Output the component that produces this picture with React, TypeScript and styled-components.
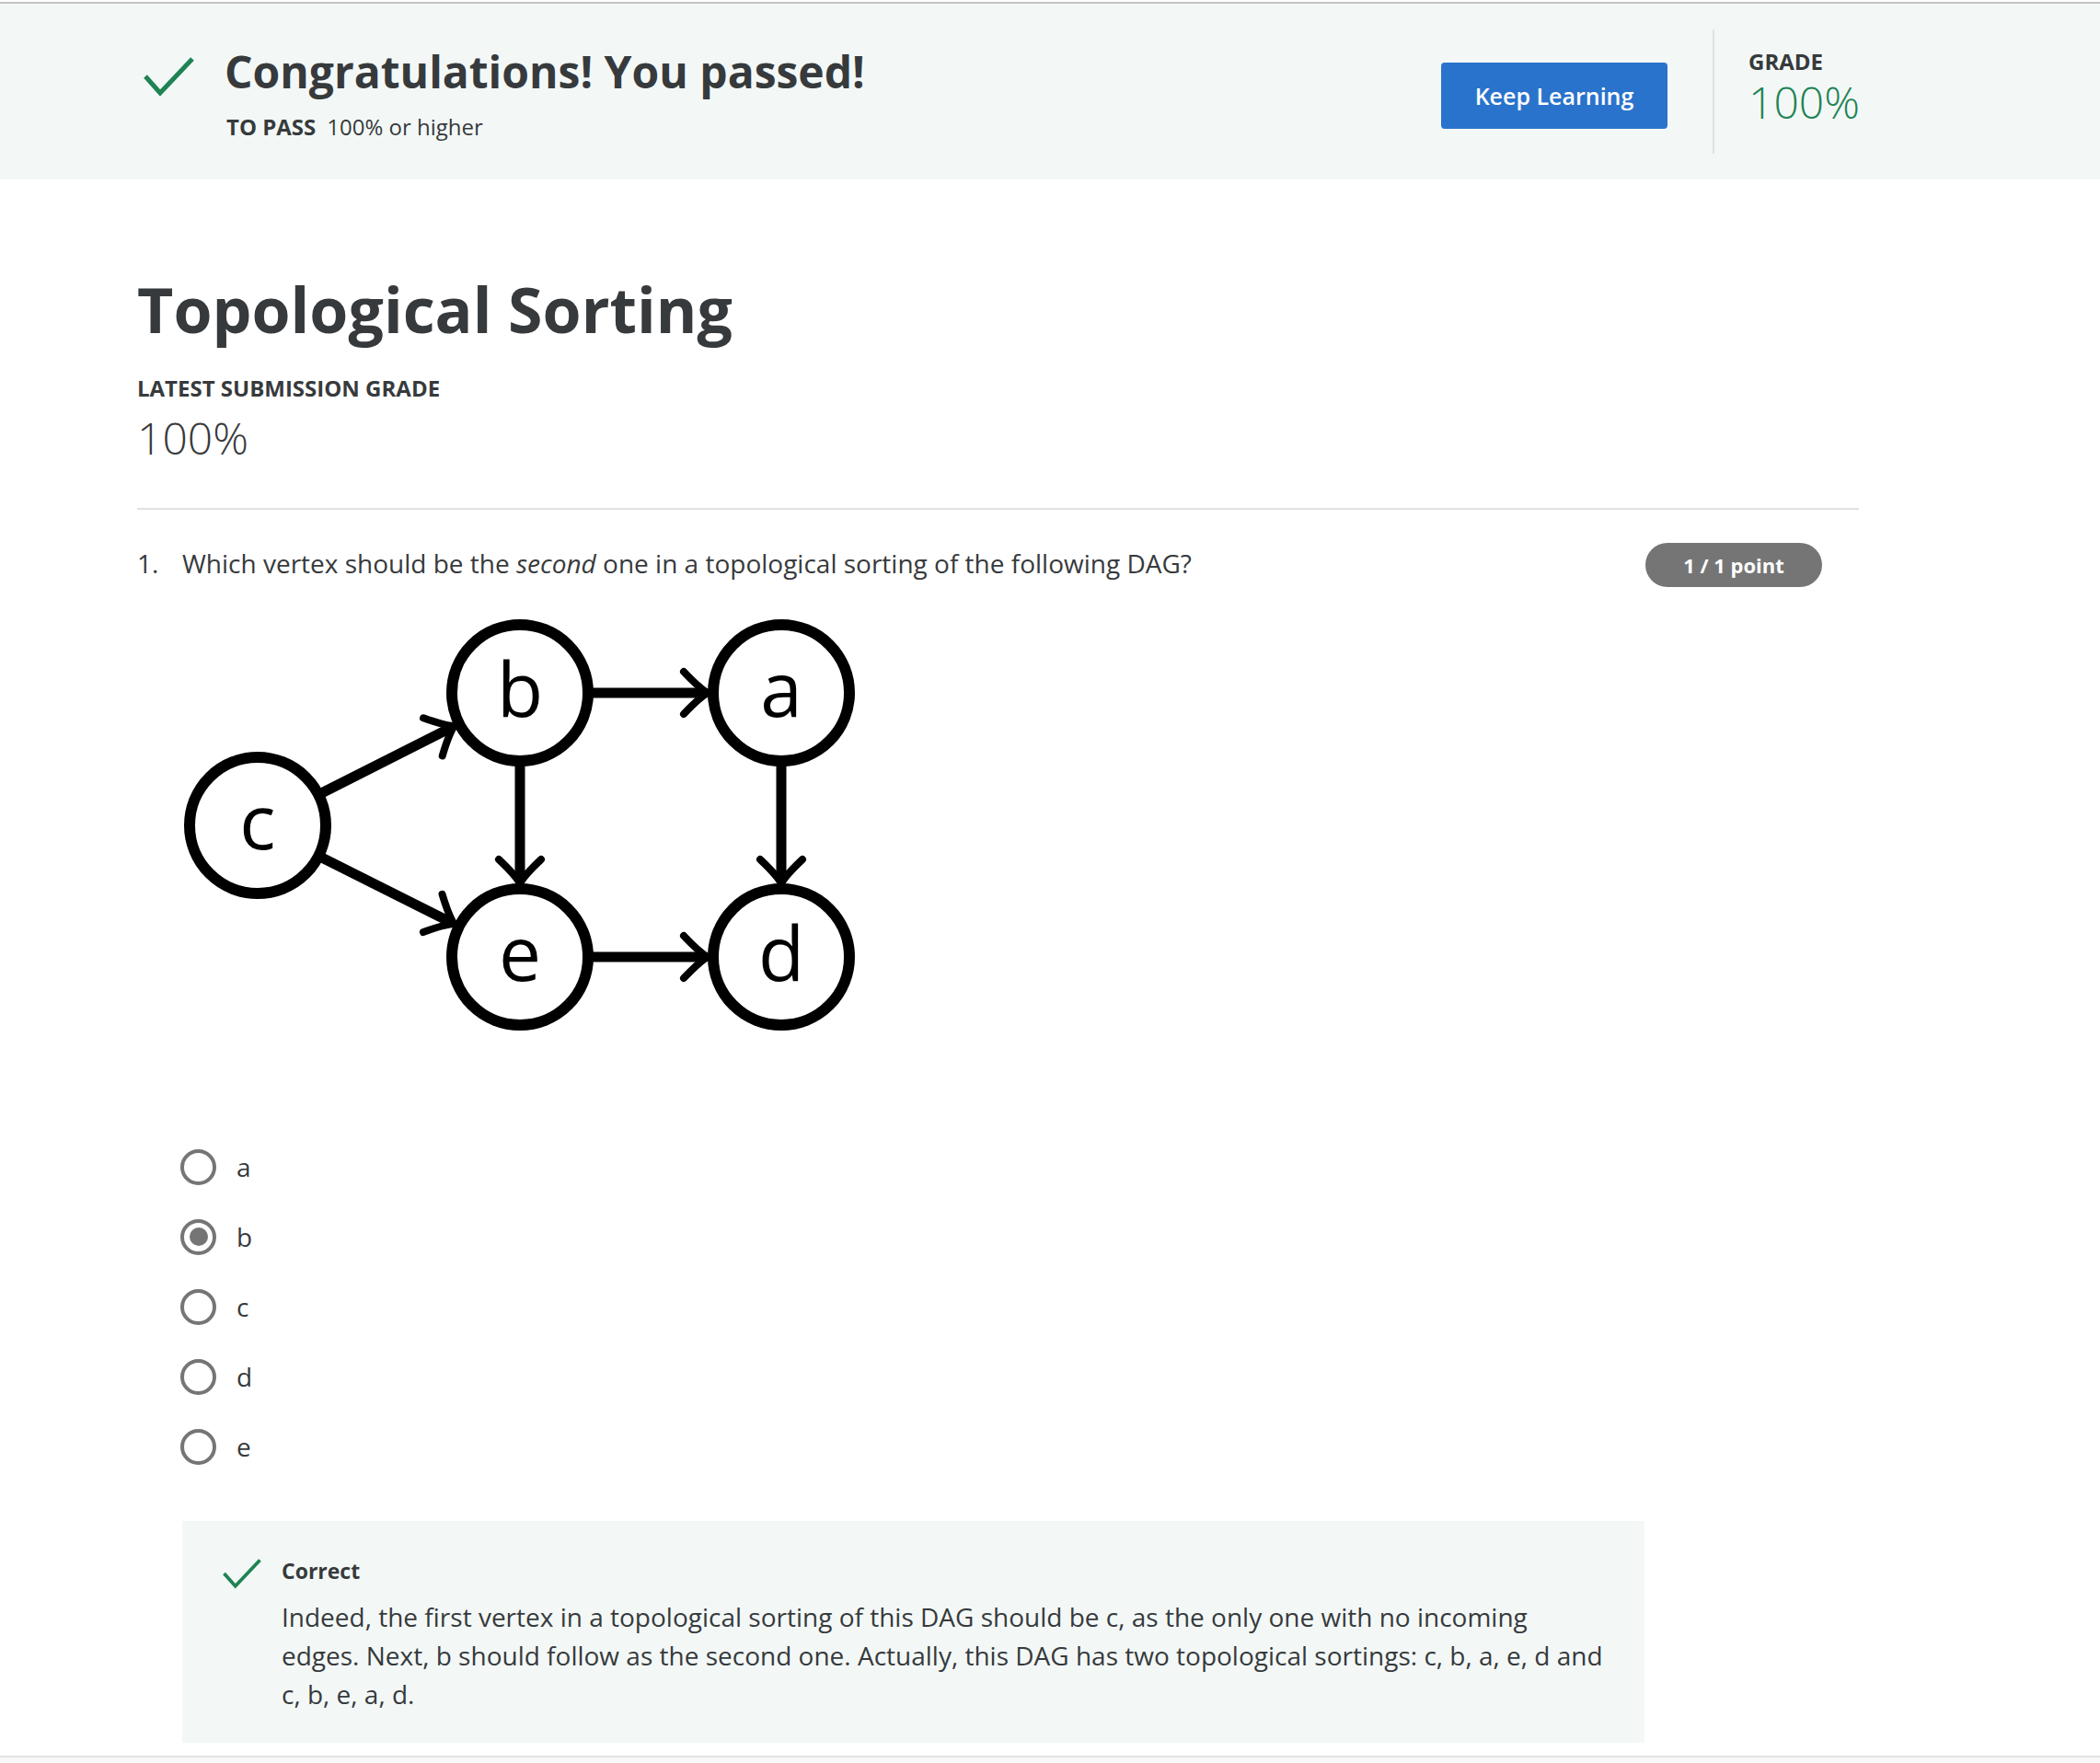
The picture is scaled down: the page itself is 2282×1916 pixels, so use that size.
import React from 'react'
import styled, { createGlobalStyle } from 'styled-components'

const GlobalStyle = createGlobalStyle`
  html, body {
    margin: 0;
    padding: 0;
    background: #ffffff;
  }
  body {
    font-family: 'Open Sans', 'Liberation Sans', sans-serif;
    color: #373a3c;
  }
  * {
    box-sizing: border-box;
  }
`

const Page = styled.div`
  padding-top: 2px;
`

const Banner = styled.header`
  display: flex;
  align-items: center;
  background: #f3f8f7;
  border-top: 2px solid #c4c4c4;
  padding: 28px 262px 28px 156px;
`

const PassBlock = styled.div`
  flex: 1;
  display: flex;
  align-items: flex-start;
  gap: 33px;
  padding-top: 3px;
`

const CheckMark = styled.svg<{ $top: number }>`
  flex: none;
  margin-top: ${(p) => p.$top}px;
`

const PassText = styled.div`
  display: flex;
  flex-direction: column;
`

const Congrats = styled.h2`
  margin: 0;
  font-size: 48px;
  line-height: 60px;
  font-weight: 700;
  color: #373a3c;
`

const PassRule = styled.div`
  margin-top: 14px;
  padding-left: 2px;
  font-size: 24px;
  line-height: 32px;
  color: #373a3c;

  strong {
    font-weight: 700;
    margin-right: 12px;
  }
`

const KeepButton = styled.button`
  margin-top: 9px;
  width: 246px;
  height: 72px;
  border: none;
  border-radius: 4px;
  background: #2a73cc;
  color: #ffffff;
  font-family: inherit;
  font-size: 25px;
  font-weight: 600;
  cursor: pointer;
`

const VDivider = styled.div`
  width: 2px;
  height: 135px;
  background: #e1e1e1;
  margin: 0 37px 0 49px;
`

const GradeBlock = styled.div`
  width: 120px;
  margin-bottom: 12px;
  display: flex;
  flex-direction: column;
  gap: 2px;
`

const SmallCaps = styled.div`
  font-size: 24px;
  line-height: 32px;
  font-weight: 700;
  text-transform: uppercase;
  color: #373a3c;
`

const BigPercent = styled.div<{ $green?: boolean }>`
  font-size: 48px;
  line-height: 52px;
  font-weight: 300;
  color: ${(p) => (p.$green ? '#1f8354' : '#373a3c')};
`

const Main = styled.main`
  padding: 0 262px 0 149px;
`

const Title = styled.h1`
  margin: 100px 0 0;
  font-size: 68px;
  line-height: 82px;
  font-weight: 700;
  color: #373a3c;
`

const GradeSection = styled.div`
  margin-top: 29px;
  padding-bottom: 50px;
  border-bottom: 2px solid #e1e1e1;
  display: flex;
  flex-direction: column;
  gap: 12px;
`

const Question = styled.section`
  padding-top: 32px;
`

const QuestionRow = styled.div`
  display: flex;
  align-items: center;
`

const QNumber = styled.span`
  width: 49px;
  font-size: 28px;
  line-height: 42px;
`

const QText = styled.p`
  flex: 1;
  margin: 0;
  font-size: 28px;
  line-height: 42px;

  em {
    font-style: italic;
  }
`

const Points = styled.span`
  margin: 4px 40px 0 0;
  width: 192px;
  height: 48px;
  border-radius: 24px;
  background: #757575;
  color: #ffffff;
  font-size: 22px;
  font-weight: 700;
  display: flex;
  align-items: center;
  justify-content: center;
`

const Graph = styled.svg`
  display: block;
  margin: 25px 0 0 41px;
`

const Options = styled.div`
  margin: 97px 0 0 47px;
  display: flex;
  flex-direction: column;
`

const Option = styled.label`
  height: 76px;
  display: flex;
  align-items: center;
  gap: 22px;
  font-size: 28px;
  color: #373a3c;
`

const Radio = styled.span<{ $checked?: boolean }>`
  width: 39px;
  height: 39px;
  border-radius: 50%;
  border: 4px solid #757575;
  display: flex;
  align-items: center;
  justify-content: center;

  &::after {
    content: '';
    width: 20px;
    height: 20px;
    border-radius: 50%;
    background: ${(p) => (p.$checked ? '#757575' : 'transparent')};
  }
`

const Feedback = styled.div`
  margin: 43px 0 0 49px;
  width: 1589px;
  background: #f3f8f7;
  padding: 38px 40px 32px 44px;
  display: flex;
  gap: 22px;
`

const FeedbackBody = styled.div`
  flex: 1;
`

const FeedbackTitle = styled.div`
  font-size: 23px;
  line-height: 32px;
  font-weight: 700;
`

const FeedbackText = styled.p`
  margin: 13px 0 0;
  font-size: 28px;
  line-height: 42px;
`

const Footer = styled.footer`
  margin-top: 14px;
  height: 22px;
  border-top: 2px solid #e3e3e3;
  background: #f8f8f8;
`

const Check = ({ w, h, top }: { w: number; h: number; top: number }) => (
  <CheckMark $top={top} width={w} height={h} viewBox="0 0 55 44">
    <path d="M2 22 L18 40 L53 3" fill="none" stroke="#1f8354" strokeWidth="5" />
  </CheckMark>
)

type Pt = { x: number; y: number }

const nodes: Record<string, Pt> = {
  c: { x: 90, y: 234 },
  b: { x: 375, y: 90 },
  a: { x: 659, y: 90 },
  e: { x: 375, y: 377 },
  d: { x: 659, y: 377 },
}

const edges: [string, string][] = [
  ['c', 'b'],
  ['c', 'e'],
  ['b', 'a'],
  ['b', 'e'],
  ['a', 'd'],
  ['e', 'd'],
]

const OUTER = 80

const Arrow = ({ from, to }: { from: Pt; to: Pt }) => {
  const dx = to.x - from.x
  const dy = to.y - from.y
  const len = Math.hypot(dx, dy)
  const ux = dx / len
  const uy = dy / len
  const sx = from.x + ux * (OUTER - 4)
  const sy = from.y + uy * (OUTER - 4)
  const ex = to.x - ux * OUTER
  const ey = to.y - uy * OUTER
  const angle = (Math.atan2(dy, dx) * 180) / Math.PI
  return (
    <g>
      <line x1={sx} y1={sy} x2={ex - ux * 4} y2={ey - uy * 4} stroke="#000" strokeWidth="11" />
      <path
        transform={`translate(${ex} ${ey}) rotate(${angle})`}
        d="M -26 -23 Q -9 -5 0 0 Q -9 5 -26 23"
        fill="none"
        stroke="#000"
        strokeWidth="8"
        strokeLinecap="round"
      />
    </g>
  )
}

const DagPicture = () => (
  <Graph width={760} height={470} viewBox="0 0 760 470">
    {edges.map(([f, t]) => (
      <Arrow key={f + t} from={nodes[f]} to={nodes[t]} />
    ))}
    {Object.entries(nodes).map(([name, p]) => (
      <g key={name}>
        <circle cx={p.x} cy={p.y} r={OUTER - 6} fill="#fff" stroke="#000" strokeWidth="12" />
        <text
          x={p.x}
          y={p.y + 26}
          textAnchor="middle"
          fontFamily="'Open Sans', 'Liberation Sans', sans-serif"
          fontSize="82"
          fill="#000"
        >
          {name}
        </text>
      </g>
    ))}
  </Graph>
)

const choices = ['a', 'b', 'c', 'd', 'e']

export default function App() {
  return (
    <Page>
      <GlobalStyle />
      <Banner>
        <PassBlock>
          <Check w={55} h={44} top={13} />
          <PassText>
            <Congrats>Congratulations! You passed!</Congrats>
            <PassRule>
              <strong>TO PASS</strong>100% or higher
            </PassRule>
          </PassText>
        </PassBlock>
        <KeepButton>Keep Learning</KeepButton>
        <VDivider />
        <GradeBlock>
          <SmallCaps>Grade</SmallCaps>
          <BigPercent $green>100%</BigPercent>
        </GradeBlock>
      </Banner>

      <Main>
        <Title>Topological Sorting</Title>
        <GradeSection>
          <SmallCaps>Latest Submission Grade</SmallCaps>
          <BigPercent>100%</BigPercent>
        </GradeSection>

        <Question>
          <QuestionRow>
            <QNumber>1.</QNumber>
            <QText>
              Which vertex should be the <em>second</em> one in a topological sorting of the
              following DAG?
            </QText>
            <Points>1 / 1 point</Points>
          </QuestionRow>

          <DagPicture />

          <Options>
            {choices.map((c) => (
              <Option key={c}>
                <Radio $checked={c === 'b'} />
                {c}
              </Option>
            ))}
          </Options>

          <Feedback>
            <Check w={42} h={34} top={2} />
            <FeedbackBody>
              <FeedbackTitle>Correct</FeedbackTitle>
              <FeedbackText>
                Indeed, the first vertex in a topological sorting of this DAG should be c, as the
                only one with no incoming edges. Next, b should follow as the second one. Actually,
                this DAG has two topological sortings: c, b, a, e, d and c, b, e, a, d.
              </FeedbackText>
            </FeedbackBody>
          </Feedback>
        </Question>
      </Main>
      <Footer />
    </Page>
  )
}
